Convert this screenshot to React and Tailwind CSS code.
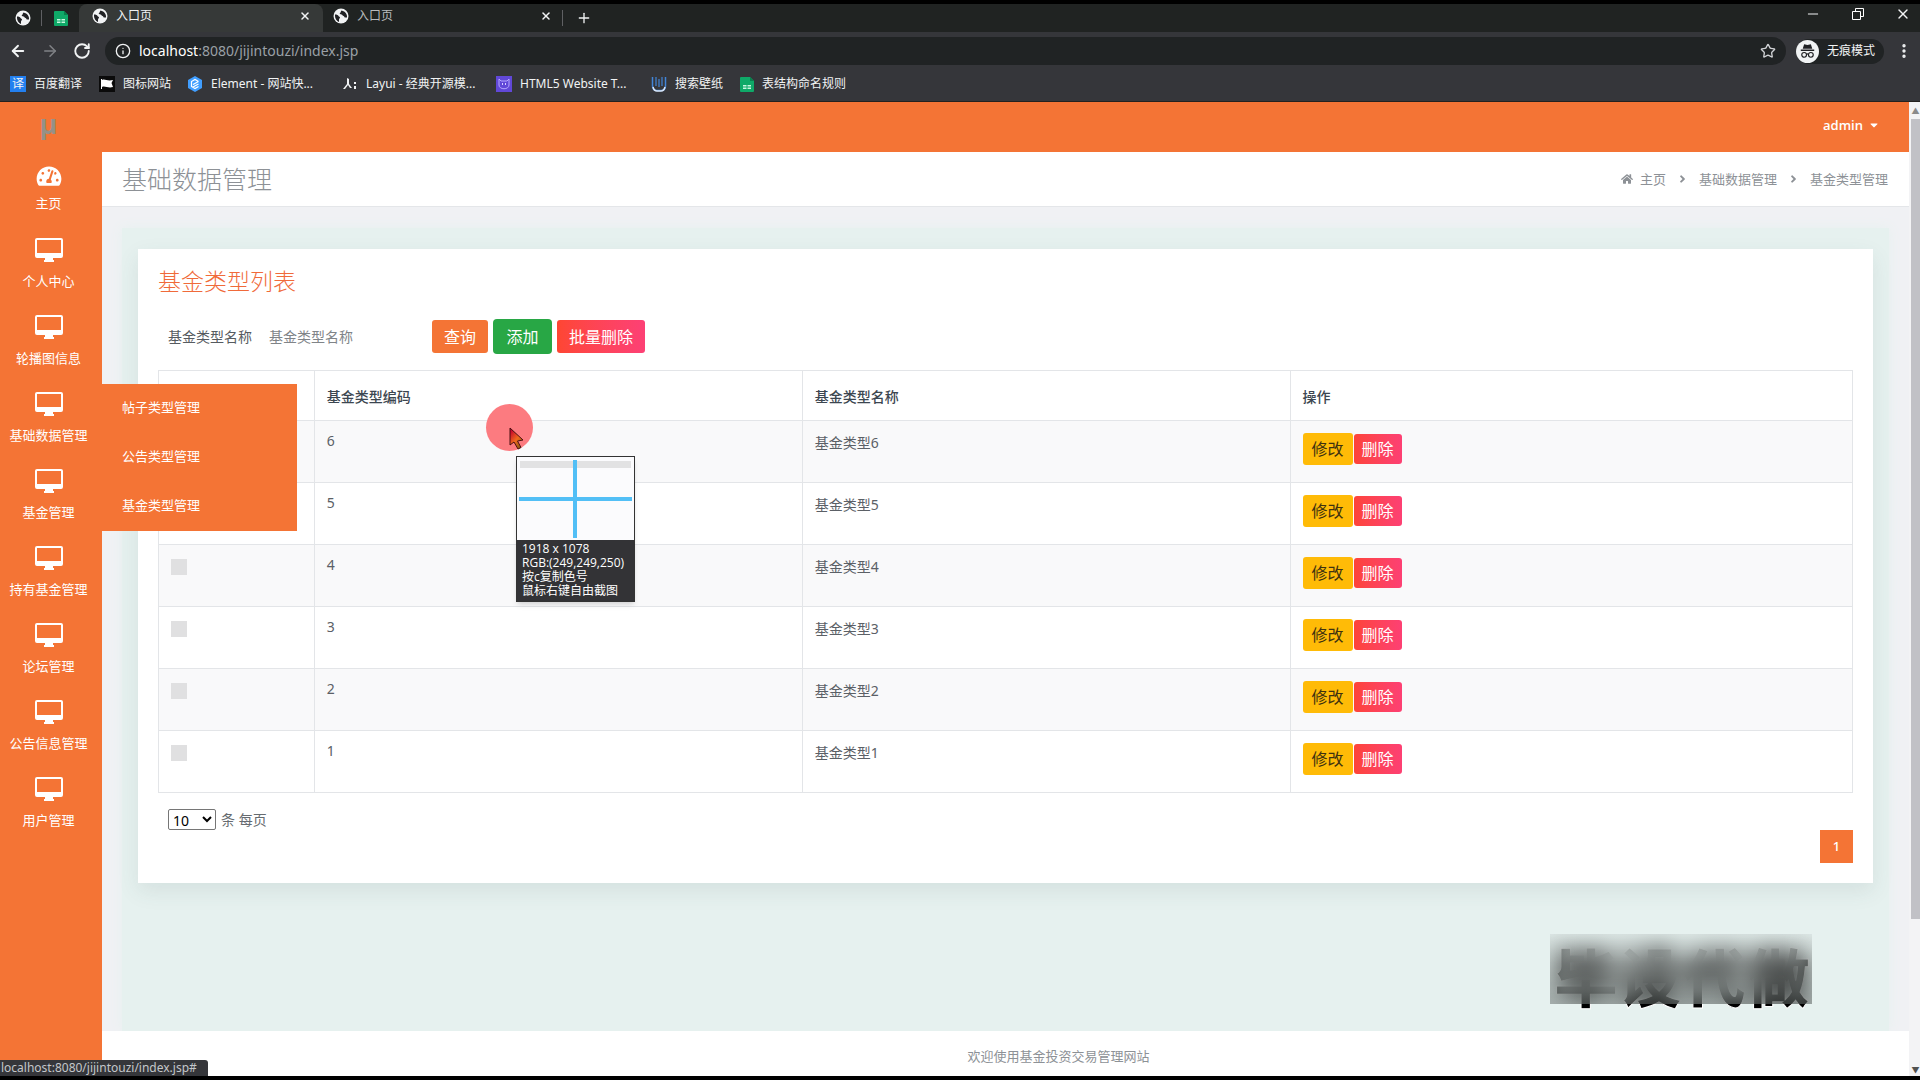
import React, { useState } from 'react';
import { ArrowLeft, ArrowRight, RotateCw, Info, Star, X, Plus, Minus, MoreVertical } from 'lucide-react';
import { FaTachometerAlt, FaHome, FaAngleRight, FaCaretDown } from 'react-icons/fa';

// -------- Data --------
const menuItems = ['个人中心', '轮播图信息', '基础数据管理', '基金管理', '持有基金管理', '论坛管理', '公告信息管理', '用户管理'];
const subItems = ['帖子类型管理', '公告类型管理', '基金类型管理'];
const rows = [6, 5, 4, 3, 2, 1];

// -------- Icons --------
function Globe() {
  return (
    <svg className="w-4 h-4 shrink-0" viewBox="0 0 16 16" aria-hidden="true">
      <circle cx="8" cy="8" r="7.5" fill="#f1f3f4" />
      <path d="M2 6.5c2 0 3 .5 3.500 1.500s1.500.5 1.500 1.500-1 1-1 2v2.500C3.500 13 2 10.500 2 8z" fill="#202124" />
      <path d="M8.500 2.500c-1 1-.5 2-1.500 2.500s.5 1.500 1.500 1.500 1 1.500 2 1.500.5 1.500 1.500 1.500H14c.5-3-1.500-6-5.500-7z" fill="#202124" />
    </svg>
  );
}

function Sheet() {
  return (
    <svg className="w-[14px] h-4 shrink-0" viewBox="0 0 14 16" aria-hidden="true">
      <path d="M1 1h9l4 4v10a1 1 0 0 1-1 1H1a1 1 0 0 1-1-1V2a1 1 0 0 1 1-1z" fill="#0fa968" />
      <path d="M10 1l4 4h-4z" fill="#087f4c" />
      <path d="M3 9h3.500v1.500H3zM7.500 9H11v1.500H7.500zM3 11.500h3.500V13H3zM7.500 11.500H11V13H7.500z" fill="#c9f5df" />
    </svg>
  );
}

function Monitor() {
  return (
    <svg className="w-7 h-6" viewBox="0 0 28 24" aria-hidden="true">
      <path fillRule="evenodd" d="M2 0h24a2 2 0 0 1 2 2v16a2 2 0 0 1-2 2h-8v2h1v2H9v-2h1v-2H2a2 2 0 0 1-2-2V2a2 2 0 0 1 2-2zm0 2v13h24V2z" fill="#fff" />
    </svg>
  );
}

function Incognito() {
  return (
    <svg className="w-[23px] h-[23px]" viewBox="0 0 24 24" aria-hidden="true">
      <circle cx="12" cy="12" r="12" fill="#f1f3f4" />
      <path d="M8.500 4.500l3.500.7 3.500-.7 1.500 4.500H7zM5 10h14v1.500H5z" fill="#202124" />
      <g fill="none" stroke="#202124" strokeWidth="1.200">
        <circle cx="8.500" cy="15.500" r="2.500" />
        <circle cx="15.500" cy="15.500" r="2.500" />
        <path d="M11 15q1-1 2 0" />
      </g>
    </svg>
  );
}

function BookmarkIcon({ kind }) {
  if (kind === 'sheet') return <Sheet />;
  if (kind === 'fanyi') {
    return <span className="w-4 h-4 bg-[#2380f0] text-[12px] leading-4 text-center">译</span>;
  }
  return (
    <svg className="w-4 h-4 shrink-0" viewBox="0 0 16 16" aria-hidden="true">
      {kind === 'flag' && (
        <>
          <rect width="16" height="16" fill="#0b0b0b" />
          <path d="M2 3h1v10H2zM3 4c3-1.500 5 1.500 11 0l-1.500 3L14 11c-5 1.500-8-1.500-11 0z" fill="#fff" />
        </>
      )}
      {kind === 'element' && (
        <>
          <path d="M8 0l7 4v8l-7 4-7-4V4z" fill="#409eff" />
          <path d="M11.500 5.500L8 3.500 4.500 5.500v5L8 12.500l3.500-2M6 8.500l5.500-3M6 11l5.500-3" fill="none" stroke="#fff" strokeWidth="1.200" />
        </>
      )}
      {kind === 'layui' && (
        <path d="M5 2l2 1v5l3 4H8L6 9l-3 4H1l4-5zM12 6h2v2h-2zM12 10h2v3h-2z" fill="#f1f3f4" />
      )}
      {kind === 'html5' && (
        <>
          <rect width="16" height="16" fill="#6148d8" />
          <path d="M3 3l2 2h6l2-2v6c0 5-10 5-10 0z" fill="none" stroke="#b7a8ff" strokeWidth="1" />
          <path d="M6 7h1v2H6zM9 7h1v2H9z" fill="#d8d0ff" />
        </>
      )}
      {kind === 'search' && (
        <>
          <path d="M1.500 1v9q0 4.500 4.500 4.500h4q4.500 0 4.500-4.500V1" fill="none" stroke="#4285d8" strokeWidth="1.500" />
          <path d="M2 11q1 4 4 4h4q3 0 4-4" fill="none" stroke="#dbe7f7" strokeWidth="1.500" />
          <path d="M5 1v9M8 3v8M11 1v9" stroke="#4285d8" strokeWidth="1.200" />
        </>
      )}
    </svg>
  );
}

const bookmarks = [
  { kind: 'fanyi', label: '百度翻译', width: 'w-[89px]' },
  { kind: 'flag', label: '图标网站', width: 'w-[88px]' },
  { kind: 'element', label: 'Element - 网站快...', width: 'w-[155px]' },
  { kind: 'layui', label: 'Layui - 经典开源模...', width: 'w-[154px]' },
  { kind: 'html5', label: 'HTML5 Website T...', width: 'w-[155px]' },
  { kind: 'search', label: '搜索壁纸', width: 'w-[89px]' },
  { kind: 'sheet', label: '表结构命名规则', width: 'w-[120px]' },
];

// -------- Browser frame --------
function BrowserBar() {
  return (
    <div className="bg-[#35363a] text-[#f1f3f4] font-['Noto_Sans','Noto_Sans_CJK_SC',sans-serif]">
      <div className="flex items-center h-7 bg-[#202322]">
        <button aria-label="入口页" className="w-[42px] flex justify-center border-r border-[#5f6063]"><span className="pl-1"><Globe /></span></button>
        <button aria-label="表格" className="w-[37px] flex justify-center"><Sheet /></button>
        <div className="w-[244px] h-full flex items-center bg-[#363938] rounded-t-lg pl-[13px] pr-3 pb-1">
          <Globe />
          <span className="ml-2 flex-1 text-[12px]">入口页</span>
          <button aria-label="关闭标签页"><X className="w-3 h-3" strokeWidth={3} /></button>
        </div>
        <div className="w-[239px] h-full flex items-center pl-[10px] pr-[10px] pb-1">
          <Globe />
          <span className="ml-2 flex-1 text-[12px] text-[#b9bbbe]">入口页</span>
          <button aria-label="关闭标签页"><X className="w-3 h-3" strokeWidth={3} /></button>
        </div>
        <button aria-label="新标签页" className="pl-[13px] border-l border-[#5f6063]"><Plus className="w-4 h-4" /></button>
        <div className="ml-auto flex items-center gap-[31px] pr-[9px] pb-2">
          <button aria-label="最小化"><Minus className="w-4 h-4" strokeWidth={1.5} /></button>
          <button aria-label="还原">
            <svg className="w-3 h-3" viewBox="0 0 12 12" fill="none" stroke="#fff"><path d="M.5 3.500h8v8h-8zM3.500 3.500v-3h8v8h-3" /></svg>
          </button>
          <button aria-label="关闭"><X className="w-4 h-4" strokeWidth={2} /></button>
        </div>
      </div>
      <div className="flex items-center h-[38px] pl-[9px] pr-[7px]">
        <button aria-label="后退"><ArrowLeft className="w-[18px] h-[18px]" strokeWidth={2.5} /></button>
        <button aria-label="前进" className="ml-[14px] text-[#808286]"><ArrowRight className="w-[18px] h-[18px]" /></button>
        <button aria-label="刷新" className="ml-[14px]"><RotateCw className="w-[18px] h-[18px]" strokeWidth={2.5} /></button>
        <div className="ml-[14px] h-7 flex-1 flex items-center rounded-full bg-[#202324] pl-[10px] pr-[10px]">
          <Info className="w-4 h-4" />
          <div className="ml-2 flex-1 text-[14px] leading-5 text-[#9aa0a6]"><span className="text-white">localhost</span>:8080/jijintouzi/index.jsp</div>
          <button aria-label="收藏"><Star className="w-4 h-4 text-[#d0d2d5]" /></button>
        </div>
        <div className="ml-[10px] w-[88px] h-[25px] flex items-center gap-2 rounded-full bg-[#202324]">
          <Incognito />
          <span className="text-[12px]">无痕模式</span>
        </div>
        <button aria-label="菜单" className="ml-[11px]"><MoreVertical className="w-[18px] h-[18px]" strokeWidth={2.5} /></button>
      </div>
      <div className="flex items-center h-8 pl-[10px] pb-3 pt-2 border-b border-[#24211f]">
        {bookmarks.map(b => (
          <a key={b.kind} href="#" className={`${b.width} flex items-center gap-2 whitespace-nowrap text-[12px]`}>
            <BookmarkIcon kind={b.kind} />
            {b.label}
          </a>
        ))}
      </div>
    </div>
  );
}

// -------- Sidebar --------
function Sidebar() {
  return (
    <nav className="w-[102px] shrink-0 bg-[#f47435] text-white text-[13px] leading-5">
      <div className="h-[63px] pt-1 pr-[5px] text-center text-[27px] leading-9 font-bold text-[#959188] font-['Open_Sans',sans-serif]">μ</div>
      <a href="#" className="h-[73px] flex flex-col items-center gap-[6px] pr-[5px]">
        <FaTachometerAlt className="w-[26px] h-[22px]" />
        主页
      </a>
      {menuItems.map(item => (
        <div key={item} className="relative h-[77px]">
          <a href="#" className="flex flex-col items-center gap-[9px] pr-[5px] whitespace-nowrap">
            <Monitor />
            {item}
          </a>
          {item === '基础数据管理' && (
            <ul className="absolute left-[101px] -top-2 z-10 w-[196px] bg-[#f47435]">
              {subItems.map(s => (
                <li key={s}><a href="#" className="flex items-center h-[49px] pl-[21px] pb-[3px]">{s}</a></li>
              ))}
            </ul>
          )}
        </div>
      ))}
    </nav>
  );
}

const cell = 'border border-[#e3e5e8] px-3 text-left align-top';

function TypeTable() {
  return (
    <table className="w-full table-fixed border-collapse text-[14px] leading-5 text-[#5b6066]">
      <colgroup>
        <col className="w-[9.2%]" />
        <col className="w-[28.8%]" />
        <col className="w-[28.8%]" />
        <col />
      </colgroup>
      <thead>
        <tr className="h-[50px] text-[#3c4650]">
          <th className={cell}><input type="checkbox" aria-label="全选" className="mt-4 w-4 h-4 appearance-none bg-[#e0e0e1]" /></th>
          {['基金类型编码', '基金类型名称', '操作'].map(h => (
            <th key={h} className={`${cell} pt-4 font-medium`}>{h}</th>
          ))}
        </tr>
      </thead>
      <tbody>
        {rows.map(n => (
          <tr key={n} className="h-[62px] odd:bg-[#f9f9fa]">
            <td className={cell}><input type="checkbox" aria-label={`选择 ${n}`} className="mt-[14px] w-4 h-4 appearance-none bg-[#e0e0e1]" /></td>
            <td className={`${cell} pt-[10px]`}>{n}</td>
            <td className={`${cell} pt-3`}>基金类型{n}</td>
            <td className={`${cell} pt-3`}>
              <div className="flex items-center gap-px text-[16px]">
                <button className="w-[50px] h-8 rounded-[3px] bg-[#ffbb07] text-[#3f3210]">修改</button>
                <button className="w-12 h-[30px] rounded-[3px] bg-linear-to-r from-[#fd4438] to-[#fd4073] text-white">删除</button>
              </div>
            </td>
          </tr>
        ))}
      </tbody>
    </table>
  );
}

function Picker() {
  return (
    <>
      <div className="absolute left-[486px] top-[404px] w-[47px] h-[47px] rounded-full bg-[#fc7b80]" />
      <svg className="absolute left-[509px] top-[427px] w-4 h-6" viewBox="0 0 16 24" aria-hidden="true">
        <defs>
          <linearGradient id="pointer" x1="0" y1="0" x2="0.7" y2="1">
            <stop offset="0.1" stopColor="#c4002e" />
            <stop offset="0.6" stopColor="#f06a1d" />
            <stop offset="1" stopColor="#8a5a10" />
          </linearGradient>
        </defs>
        <path d="M1 1v17l4-3 4 7 3-1.500-3.500-6.500 5.500-1z" fill="url(#pointer)" stroke="#4a1010" />
      </svg>
      <div className="absolute left-[516px] top-[456px] w-[119px] border border-[#333] bg-[#fbfbfd] shadow-md">
        <svg className="block w-full h-[83px]" viewBox="0 0 117 83" aria-hidden="true">
          <rect x="3" y="4" width="111" height="7" fill="#e2e2e3" />
          <path d="M2 42h113M58 3v78" stroke="#52bff6" strokeWidth="4" />
        </svg>
        <div className="h-[61px] bg-[#333336] pl-[5px] pt-[2px] text-white text-[12px] leading-[14px] whitespace-nowrap font-['Open_Sans','Noto_Sans_CJK_SC',sans-serif]">
          <p>1918 x 1078</p>
          <p>RGB:(249,249,250)</p>
          <p>按c复制色号</p>
          <p>鼠标右键自由截图</p>
        </div>
      </div>
    </>
  );
}

export default function App() {
  const [name, setName] = useState('');
  const [size, setSize] = useState('10');

  return (
    <div className="relative min-h-screen flex flex-col bg-black py-1 font-['Noto_Sans','Noto_Sans_CJK_SC',sans-serif]">
      <BrowserBar />
      <div className="flex-1 flex bg-[#f0f1f4]">
        <Sidebar />
        <div className="flex-1 flex flex-col">
          <header className="h-[50px] flex items-start justify-end bg-[#f47435] pr-[29px] pt-[13px] text-white">
            <button className="flex items-center gap-[5px] text-[13px] leading-5 font-semibold font-['Open_Sans',sans-serif]">admin <FaCaretDown className="w-3 h-3" /></button>
          </header>
          <div className="h-[55px] flex items-center justify-between bg-white border-b border-[#e4e6e9] pl-5 pr-5 text-[#8d9196]">
            <h1 className="text-[25px] leading-8 font-light">基础数据管理</h1>
            <nav className="flex items-center text-[13px] leading-5 pr-px">
              <FaHome className="mr-[7px] w-3 h-3" />
              <a href="#">主页</a>
              <FaAngleRight className="mx-[11px] w-[11px] h-3" />
              <a href="#">基础数据管理</a>
              <FaAngleRight className="mx-[11px] w-[11px] h-3" />
              <span>基金类型管理</span>
            </nav>
          </div>
          <main className="flex-1 mx-5 mt-[21px] bg-[#e6f1ef] shadow-[0_0_12px_#e6f1ef] px-4 pt-[21px]">
            <section className="bg-white px-5 pt-[14px] pb-5 shadow-[0_8px_20px_rgba(60,90,85,0.1)]">
              <h2 className="text-[23px] leading-9 text-[#f06a3a] font-light">基金类型列表</h2>
              <form className="mt-5 mb-4 flex items-center pl-[10px]" onSubmit={e => e.preventDefault()}>
                <label htmlFor="name" className="text-[14px] text-[#565b60]">基金类型名称</label>
                <input id="name" value={name} onChange={e => setName(e.target.value)} placeholder="基金类型名称"
                  className="ml-2 w-[172px] h-8 pl-[9px] text-[14px] placeholder:text-[#808488] outline-none" />
                <button className="w-14 h-[33px] rounded-[3px] bg-[#f47435] text-white text-[16px]">查询</button>
                <button type="button" className="ml-[5px] w-[59px] h-[35px] rounded bg-[#28a745] text-white text-[16px]">添加</button>
                <button type="button" className="ml-[5px] w-[88px] h-[33px] rounded-[3px] bg-linear-to-r from-[#fe4632] to-[#fd4075] text-white text-[16px]">批量删除</button>
              </form>
              <TypeTable />
              <div className="mt-4 flex items-center gap-[5px] pl-[10px] text-[14px] leading-5 text-[#666b70]">
                <select id="size" value={size} onChange={e => setSize(e.target.value)}
                  className="w-12 h-[21px] rounded-[2px] border border-[#767676] bg-white text-[14px] leading-4 text-black">
                  <option>10</option>
                  <option>25</option>
                </select>
                <label htmlFor="size">条 每页</label>
              </div>
              <div className="flex justify-end">
                <button className="w-[33px] h-[33px] bg-[#f47435] text-white text-[13px] font-medium">1</button>
              </div>
            </section>
          </main>
          <footer className="h-[45px] bg-white pl-[106px] pt-[15px] text-center text-[13px] leading-5 text-[#8d9196]">欢迎使用基金投资交易管理网站</footer>
        </div>
        <div className="w-[11px] flex flex-col items-center bg-[#f3f3f5] pl-[2px]">
          <span className="h-[17px] text-[8px] leading-[17px] text-[#8a8a8a]">▲</span>
          <div className="w-full h-[800px] bg-[#c1c1c6]" />
          <span className="mt-auto text-[8px] leading-3 text-[#505050]">▼</span>
        </div>
      </div>

      {/* overlays */}
      <Picker />
      <div className="absolute right-[108px] bottom-[66px] w-[262px] h-20 overflow-hidden">
        <p className="pl-1 text-[64px] leading-[80px] font-black text-black whitespace-nowrap [-webkit-text-stroke:1px_white] font-['Noto_Sans_CJK_SC',sans-serif]">毕设代做</p>
        <div className="absolute inset-x-0 top-0 h-[70px] bg-linear-to-b from-[#8a9290]/10 to-[#4a5250]/40 backdrop-blur-[12px]" />
      </div>
      <div className="absolute left-0 bottom-1 w-[208px] rounded-tr-[3px] bg-[#35363a] pl-px text-[12px] leading-4 text-[#c4c7ca] whitespace-nowrap font-['Noto_Sans',sans-serif]">localhost:8080/jijintouzi/index.jsp#</div>
    </div>
  );
}
